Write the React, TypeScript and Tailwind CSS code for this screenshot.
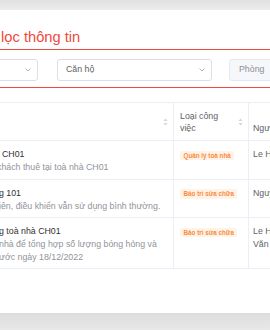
import React from "react";

type Row = {
  title: string;
  titleShift: string;
  desc: string[];
  descShift: string;
  type: string;
  user: string[];
};

const rows: Row[] = [
  {
    title: "CH01",
    titleShift: "ml-[2px]",
    desc: ["khách thuê tại toà nhà CH01"],
    descShift: "-ml-[3px]",
    type: "Quản lý toà nhà",
    user: ["Le Hoàng Nam"],
  },
  {
    title: "g 101",
    titleShift: "-ml-[1px]",
    desc: ["iên, điều khiển vẫn sử dụng bình thường."],
    descShift: "-ml-[1px]",
    type: "Bảo trì sửa chữa",
    user: ["Nguyễn Văn An"],
  },
  {
    title: "g toà nhà CH01",
    titleShift: "-ml-[1px]",
    desc: ["nhà để tổng hợp số lượng bóng hỏng và", "ước ngày 18/12/2022"],
    descShift: "-ml-[1px]",
    type: "Bảo trì sửa chữa",
    user: ["Le Hoàng", "Văn Thành"],
  },
];

const Chevron = () => (
  <svg width="6" height="4" viewBox="0 0 6 4" fill="none">
    <path d="M0.8 0.8 L3 3 L5.2 0.8" stroke="#a8abb2" strokeWidth="0.9" strokeLinecap="round" strokeLinejoin="round" />
  </svg>
);

const SortIcon = () => (
  <svg width="5" height="8" viewBox="0 0 5 8">
    <path d="M2.5 0.5 L4.5 3 L0.5 3 Z" fill="#d3d5da" />
    <path d="M2.5 7.5 L4.5 5 L0.5 5 Z" fill="#d3d5da" />
  </svg>
);

export default function App() {
  return (
    <div className="w-[270px] h-[330px] overflow-hidden flex flex-col bg-[#e4e4e4] font-['Liberation_Sans',Arial,sans-serif]">
      {/* top gray strip */}
      <div className="h-[10px] shrink-0 bg-gradient-to-b from-[#e1e1e1] to-[#ececec]" />

      {/* panel */}
      <div className="h-[303px] shrink-0 bg-white flex flex-col">
        <h2 className="mt-[18px] -ml-[21px] text-[14.7px] leading-[18px] text-[#f04a3c] whitespace-nowrap">
          Bộ lọc thông tin
        </h2>

        {/* filter box */}
        <div className="mt-[3px] border-y border-[#f04a3c] pt-[9px] pb-[6px] flex">
          <div className="-ml-[22px] w-[60px] h-[22px] shrink-0 rounded-[3px] border border-[#dcdfe6] flex items-center justify-end pr-[6px]">
            <Chevron />
          </div>
          <div className="ml-[19px] w-[155px] h-[22px] shrink-0 rounded-[3px] border border-[#dcdfe6] flex items-center justify-between pl-[8px] pr-[6px]">
            <span className="text-[8.8px] text-[#606266]">Căn hộ</span>
            <Chevron />
          </div>
          <div className="ml-[17px] w-[80px] h-[22px] shrink-0 rounded-[3px] border border-[#e4e7ed] bg-[#f5f7fa] flex items-center pl-[9px]">
            <span className="text-[8.8px] text-[#8d9095]">Phòng</span>
          </div>
        </div>

        {/* table */}
        <div className="mt-[14px] text-[8.8px]">
          <div className="grid grid-cols-[174px_75px_1fr] border-y border-[#ebeef5] h-[39px]">
            <div className="border-r border-[#ebeef5] flex items-center justify-end pr-[5px]">
              <SortIcon />
            </div>
            <div className="border-r border-[#ebeef5] flex items-center justify-between pl-[6px] pr-[5px]">
              <span className="leading-[12px] text-[#606266]">
                Loại công
                <br />
                việc
              </span>
              <SortIcon />
            </div>
            <div className="flex items-end pl-[4px] pb-[6px]">
              <span className="leading-[12px] text-[#606266] whitespace-nowrap">Người thực hiện</span>
            </div>
          </div>

          {rows.map((row, i) => (
            <div key={i} className="grid grid-cols-[174px_75px_1fr] border-b border-[#ebeef5]">
              <div className="border-r border-[#ebeef5] pt-[7px] pb-[5px] overflow-hidden whitespace-nowrap">
                <div className={`${row.titleShift} leading-[13px] text-[#303133]`}>{row.title}</div>
                {row.desc.map((line, j) => (
                  <div key={j} className={`${row.descShift} leading-[12.5px] text-[#909399]`}>
                    {line}
                  </div>
                ))}
              </div>
              <div className="border-r border-[#ebeef5] pt-[7px] pl-[6px]">
                <span className="mt-[2.5px] inline-flex h-[9.5px] items-center rounded-[2px] bg-[#fff3e8] px-[3.5px] text-[6.3px] font-semibold text-[#f98b3c] whitespace-nowrap">
                  {row.type}
                </span>
              </div>
              <div className="pt-[7px] pl-[4px] whitespace-nowrap text-[#606266]">
                {row.user.map((u, j) => (
                  <div key={j} className="leading-[13px]">
                    {u}
                  </div>
                ))}
              </div>
            </div>
          ))}
        </div>
      </div>

      {/* bottom gray strip */}
      <div className="flex-1 bg-gradient-to-b from-[#dddddd] to-[#e8e8e8]" />
    </div>
  );
}
